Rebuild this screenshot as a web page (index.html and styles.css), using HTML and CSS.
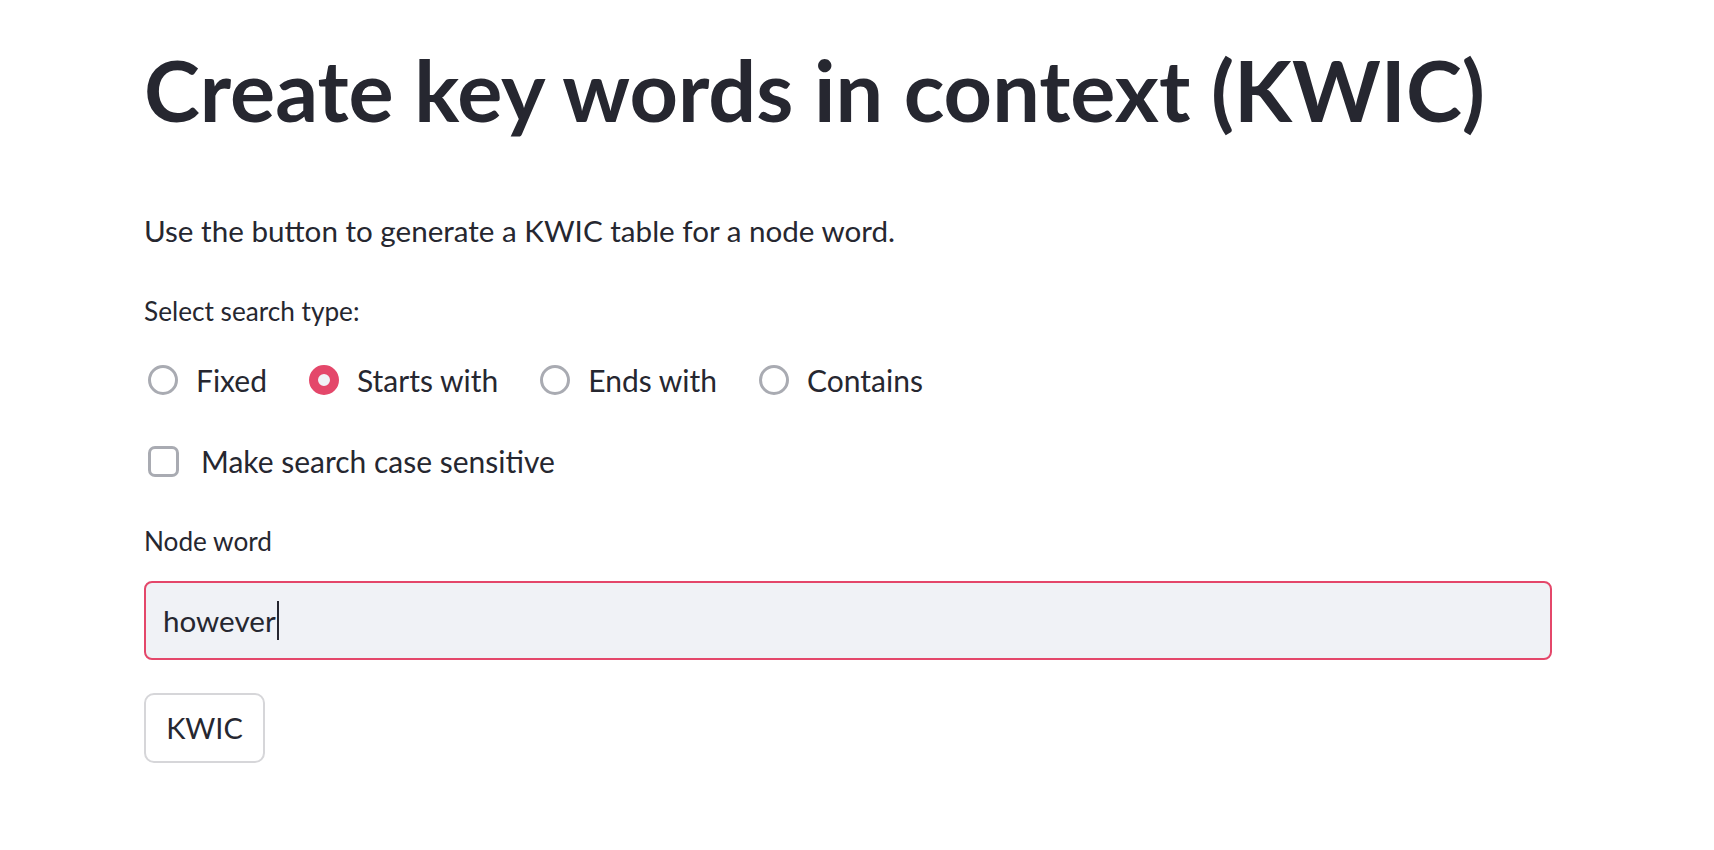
FILE: index.html
```html
<!DOCTYPE html>
<html>
<head>
<meta charset="utf-8">
<title>KWIC</title>
<link rel="stylesheet" href="styles.css">
</head>
<body>
<main class="main">
  <h1 class="title">Create key words in context (KWIC)</h1>
  <p class="intro">Use the button to generate a KWIC table for a node word.</p>

  <div class="label label-search">Select search type:</div>
  <div class="radio-group">
    <div class="radio"><span class="circle"></span><span class="radio-text">Fixed</span></div>
    <div class="radio"><span class="circle checked"></span><span class="radio-text">Starts with</span></div>
    <div class="radio"><span class="circle"></span><span class="radio-text">Ends with</span></div>
    <div class="radio"><span class="circle"></span><span class="radio-text">Contains</span></div>
  </div>

  <div class="checkbox-row">
    <span class="box"></span><span class="check-text">Make search case sensitive</span>
  </div>

  <div class="label label-node">Node word</div>
  <div class="input">
    <span class="input-text">however</span><span class="caret"></span>
  </div>

  <div class="btn">KWIC</div>
</main>
</body>
</html>
```
FILE: styles.css
```css
html, body {
  margin: 0;
  padding: 0;
  background: #ffffff;
}

body {
  font-family: Lato, "Noto Sans", sans-serif;
  color: #262730;
}

.main {
  width: 1408px;
  margin-left: 144px;
  padding-top: 39px;
  display: flex;
  flex-direction: column;
  align-items: flex-start;
}

.title {
  margin: 0;
  font-size: 84.5px;
  line-height: 101px;
  font-weight: 700;
  color: #262730;
}

.intro {
  margin: 67px 0 0 0;
  font-size: 29.6px;
  line-height: 47px;
}

.label {
  font-size: 26.2px;
  line-height: 34px;
}

.label-search {
  margin-top: 40px;
}

.radio-group {
  margin-top: 36px;
  display: flex;
  align-items: center;
  height: 32px;
  padding-left: 4px;
  gap: 42px;
}

.radio {
  display: flex;
  align-items: center;
  gap: 18px;
}

.circle {
  width: 30px;
  height: 30px;
  box-sizing: border-box;
  border-radius: 50%;
  border: 3px solid #a9abb2;
  background: #ffffff;
  flex: none;
}

.circle.checked {
  border: 9px solid #e4476a;
  background: #f0f2f6;
}

.radio-text,
.check-text {
  font-size: 30px;
  line-height: 32px;
}

.checkbox-row {
  margin-top: 49px;
  display: flex;
  align-items: center;
  height: 32px;
  padding-left: 4px;
  gap: 22px;
}

.box {
  width: 31px;
  height: 31px;
  box-sizing: border-box;
  border: 3px solid #a9abb2;
  border-radius: 7px;
  background: #ffffff;
  flex: none;
}

.label-node {
  margin-top: 47px;
}

.input {
  margin-top: 23px;
  width: 100%;
  height: 79px;
  box-sizing: border-box;
  border: 2px solid #e4476a;
  border-radius: 8px;
  background: #f0f2f6;
  display: flex;
  align-items: center;
  padding-left: 17px;
}

.input-text {
  font-size: 29.6px;
  line-height: 40px;
}

.caret {
  width: 2px;
  height: 39px;
  background: #262730;
  margin-left: 1px;
}

.btn {
  margin-top: 33px;
  width: 121px;
  height: 70px;
  box-sizing: border-box;
  border: 2px solid #d6d6d9;
  border-radius: 10px;
  background: #ffffff;
  display: flex;
  align-items: center;
  justify-content: center;
  font-size: 29px;
  line-height: 40px;
}
```
